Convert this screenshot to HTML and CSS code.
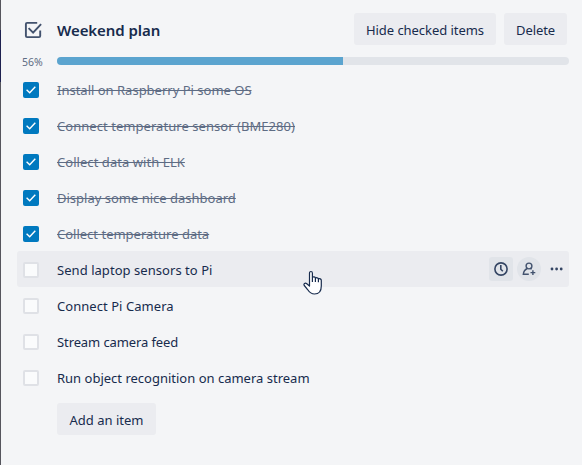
FILE: index.html
```html
<!DOCTYPE html>
<html lang="en">
<head>
<meta charset="utf-8">
<title>Weekend plan</title>
<link rel="stylesheet" href="styles.css">
</head>
<body>
<svg class="defs" width="0" height="0" aria-hidden="true">
  <symbol id="check" viewBox="0 0 16 16"><path d="M3.6 7.7 6.7 10.7 12.3 4.7" fill="none" stroke="#fff" stroke-width="1.4"/></symbol>
</svg>
<main class="checklist">
  <header class="header">
    <svg class="title-icon" viewBox="0 0 20 20" width="20" height="20"><path d="M14.2 2.9H4.1Q2.9 2.9 2.9 4.1V15.9Q2.9 17.1 4.1 17.1H16Q17.2 17.1 17.2 15.9V10.5M5.6 8.2 10.1 12.7 18.1 4.2" fill="none" stroke="#42526e" stroke-width="1.9"/></svg>
    <h1 class="title">Weekend plan</h1>
    <button class="button hide">Hide checked items</button>
    <button class="button delete">Delete</button>
  </header>
  <div class="progress">
    <span class="percent">56%</span>
    <div class="track"><div class="fill"></div></div>
  </div>
  <ul class="items">
    <li class="item done"><span class="box"><svg width="16" height="16"><use href="#check"/></svg></span><span class="label">Install on Raspberry Pi some OS</span></li>
    <li class="item done"><span class="box"><svg width="16" height="16"><use href="#check"/></svg></span><span class="label wide">Connect temperature sensor (BME280)</span></li>
    <li class="item done"><span class="box"><svg width="16" height="16"><use href="#check"/></svg></span><span class="label wide">Collect data with ELK</span></li>
    <li class="item done"><span class="box"><svg width="16" height="16"><use href="#check"/></svg></span><span class="label">Display some nice dashboard</span></li>
    <li class="item done"><span class="box"><svg width="16" height="16"><use href="#check"/></svg></span><span class="label">Collect temperature data</span></li>
    <li class="item hovered"><span class="box"></span><span class="label wide">Send laptop sensors to Pi</span>
      <span class="actions">
        <span class="action due"><svg width="16" height="16" viewBox="0 0 16 16" fill="none" stroke="#344563" stroke-width="1.6"><circle cx="8" cy="8" r="6.1"/><path d="M7.8 4V8.2L9.8 10.3"/></svg></span>
        <span class="action member"><svg width="16" height="16" viewBox="0 0 16 16" fill="none" stroke="#42526e" stroke-width="1.4"><circle cx="8" cy="5" r="2.9"/><path d="M6.3 7.5C4 8.6 2.6 10.3 2.3 13.3H7.8M9.6 7.4 10.6 8.3M11.9 9.2V14M9.5 11.6H14.3"/></svg></span>
        <span class="action more"><svg width="16" height="16" viewBox="0 0 16 16" fill="#344563"><circle cx="3" cy="8" r="1.4"/><circle cx="7.6" cy="8" r="1.4"/><circle cx="12.2" cy="8" r="1.4"/></svg></span>
      </span>
    </li>
    <li class="item"><span class="box"></span><span class="label wide">Connect Pi Camera</span></li>
    <li class="item"><span class="box"></span><span class="label tight">Stream camera feed</span></li>
    <li class="item"><span class="box"></span><span class="label">Run object recognition on camera stream</span></li>
  </ul>
  <button class="button add">Add an item</button>
</main>
<svg class="cursor" width="20" height="26" viewBox="0 0 20 26"><path d="M6.5 14.5V3.2C6.5 .9 9.4 .9 9.4 3.2V7.5C10.2 6.5 12.2 6.8 12.4 8.2C13.4 7.3 15.2 7.8 15.4 9C16.6 8.2 18.3 9 18.3 10.5V16C18.3 20.5 16.3 24 11.5 24C7.8 24 6.5 22.5 4.8 19.8L1.3 15.5C.2 13.7 2.2 12.5 3.8 13.8L6.5 16V14.5M9.4 7.5V12M12.4 8.2V12M15.4 9V12.3" fill="#fff" stroke="#172b4d" stroke-width="1.2" stroke-linejoin="round"/></svg>
</body>
</html>
```
FILE: styles.css
```css
* { box-sizing: border-box; }

body {
  margin: 0;
  width: 582px;
  height: 465px;
  overflow: hidden;
  padding-left: 1px;
  background: linear-gradient(#55555d 0 30px, #1d2150 30px 82px, #55555d 82px) 0 0 / 1px 100% no-repeat #f4f5f7;
  color: #172b4d;
  font: 13px/20px "Noto Sans", "Open Sans", sans-serif;
}

.defs { position: absolute; }

.checklist { padding: 13px 13px 0 16px; }

.header {
  display: flex;
  height: 32px;
  padding: 0 2px 0 6px;
}

.title-icon { margin-top: 7px; }

.title {
  flex: 1;
  margin: 7px 0 0 14px;
  font-size: 15px;
  line-height: 20px;
  font-weight: 600;
  letter-spacing: -0.07px;
  white-space: nowrap;
}

.button {
  height: 32px;
  padding: 1px 0 0;
  border: 0;
  border-radius: 3px;
  background: #ebecf0;
  color: #172b4d;
  font: inherit;
  white-space: nowrap;
}

.hide { width: 142px; margin-right: 8px; letter-spacing: -0.05px; }
.delete { width: 63px; letter-spacing: -0.1px; }
.add { display: block; width: 99px; margin: 8px 0 0 40px; }

.progress {
  display: flex;
  height: 26px;
  padding-top: 12px;
}

.percent {
  flex: none;
  width: 40px;
  padding-left: 5px;
  color: #5e6c84;
  font-size: 10.5px;
  line-height: 10px;
}

.track {
  flex: none;
  width: 512px;
  height: 8px;
  overflow: hidden;
  border-radius: 4px;
  background: #e1e4e9;
}

.fill { width: 286px; height: 8px; background: #5ba4cf; }

.items {
  margin: 0;
  padding: 0;
  list-style: none;
}

.item {
  display: flex;
  align-items: center;
  height: 36px;
  padding-left: 6px;
  border-radius: 3px;
}

.box {
  width: 16px;
  height: 16px;
  margin: 2px 18px 0 0;
  border: 2px solid #dfe1e6;
  border-radius: 2px;
  background: #fafbfc;
}

.label { padding-top: 1px; white-space: nowrap; }
.wide { letter-spacing: 0.05px; }
.tight { letter-spacing: -0.1px; }

.done .box { border: 0; background: #0079bf; }
.done .box svg { display: block; }
.done .label { color: #5e6c84; text-decoration: line-through; }
.hovered { background: #ebecf0; }

.actions {
  display: flex;
  gap: 4px;
  margin-left: auto;
}

.action {
  display: grid;
  place-items: center;
  width: 24px;
  height: 24px;
  border-radius: 3px;
}

.due, .member { background: #e1e4e9; }
.member { border-radius: 50%; }

.cursor { position: absolute; left: 303px; top: 270px; }
```
